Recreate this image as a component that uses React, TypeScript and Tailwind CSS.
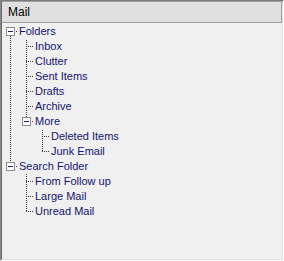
type Node = {
  label: string;
  guides: boolean[];
  last: boolean;
  box?: boolean;
  first?: boolean;
};

const NODES: Node[] = [
  { label: 'Folders', guides: [], last: false, box: true, first: true },
  { label: 'Inbox', guides: [true], last: false },
  { label: 'Clutter', guides: [true], last: false },
  { label: 'Sent Items', guides: [true], last: false },
  { label: 'Drafts', guides: [true], last: false },
  { label: 'Archive', guides: [true], last: false },
  { label: 'More', guides: [true], last: true, box: true },
  { label: 'Deleted Items', guides: [true, false], last: false },
  { label: 'Junk Email', guides: [true, false], last: true },
  { label: 'Search Folder', guides: [], last: true, box: true },
  { label: 'From Follow up', guides: [false], last: false },
  { label: 'Large Mail', guides: [false], last: false },
  { label: 'Unread Mail', guides: [false], last: true },
];

const vDots =
  'bg-[repeating-linear-gradient(to_bottom,#3a3a3a_0_1px,transparent_1px_2px)] bg-fixed';
const hDots =
  'bg-[repeating-linear-gradient(to_right,#3a3a3a_0_1px,transparent_1px_2px)] bg-fixed';

function TreeRow({ node }: { node: Node }) {
  return (
    <div className="flex h-[15px] items-center">
      {node.guides.map((g, i) => (
        <div key={i} className="relative h-full w-4 shrink-0">
          {g && <span className={`absolute left-2 top-0 h-full w-px ${vDots}`} />}
        </div>
      ))}
      <div className="relative h-full w-4 shrink-0">
        {!node.first && <span className={`absolute left-2 top-0 h-[8px] w-px ${vDots}`} />}
        {!node.last && <span className={`absolute left-2 top-[7px] bottom-0 w-px ${vDots}`} />}
        <span className={`absolute left-2 top-[7px] h-px w-[8px] ${hDots}`} />
        {node.box && (
          <span className="absolute left-[4px] top-[3px] flex h-[9px] w-[9px] items-center justify-center border border-[#8e8f8f] bg-white">
            <span className="h-px w-[5px] bg-[#1c2a66]" />
          </span>
        )}
      </div>
      <span className="pl-[1px] text-[11px] leading-[15px] text-[#14146e] whitespace-nowrap">
        {node.label}
      </span>
    </div>
  );
}

export default function App() {
  return (
    <div
      className="w-[284px] h-[261px] border-t border-l border-r border-b border-t-[#7a7a7a] border-l-[#8a8a8a] border-r-white border-b-white"
      style={{ fontFamily: "'Liberation Sans', Arial, sans-serif" }}
    >
      <div className="flex h-full flex-col border border-t-[#a0a0a0] border-l-[#696969] border-r-[#e3e3e3] border-b-[#e3e3e3] bg-[#f0f0f0]">
        <div className="flex h-[21px] shrink-0 items-center border-b border-r border-[#a0a0a0] bg-[#e0e0e0] pl-[6px] text-[12px] text-black">
          Mail
        </div>
        <div className="flex-1 pt-[1px]">
          {NODES.map((n) => (
            <TreeRow key={n.label} node={n} />
          ))}
        </div>
      </div>
    </div>
  );
}
